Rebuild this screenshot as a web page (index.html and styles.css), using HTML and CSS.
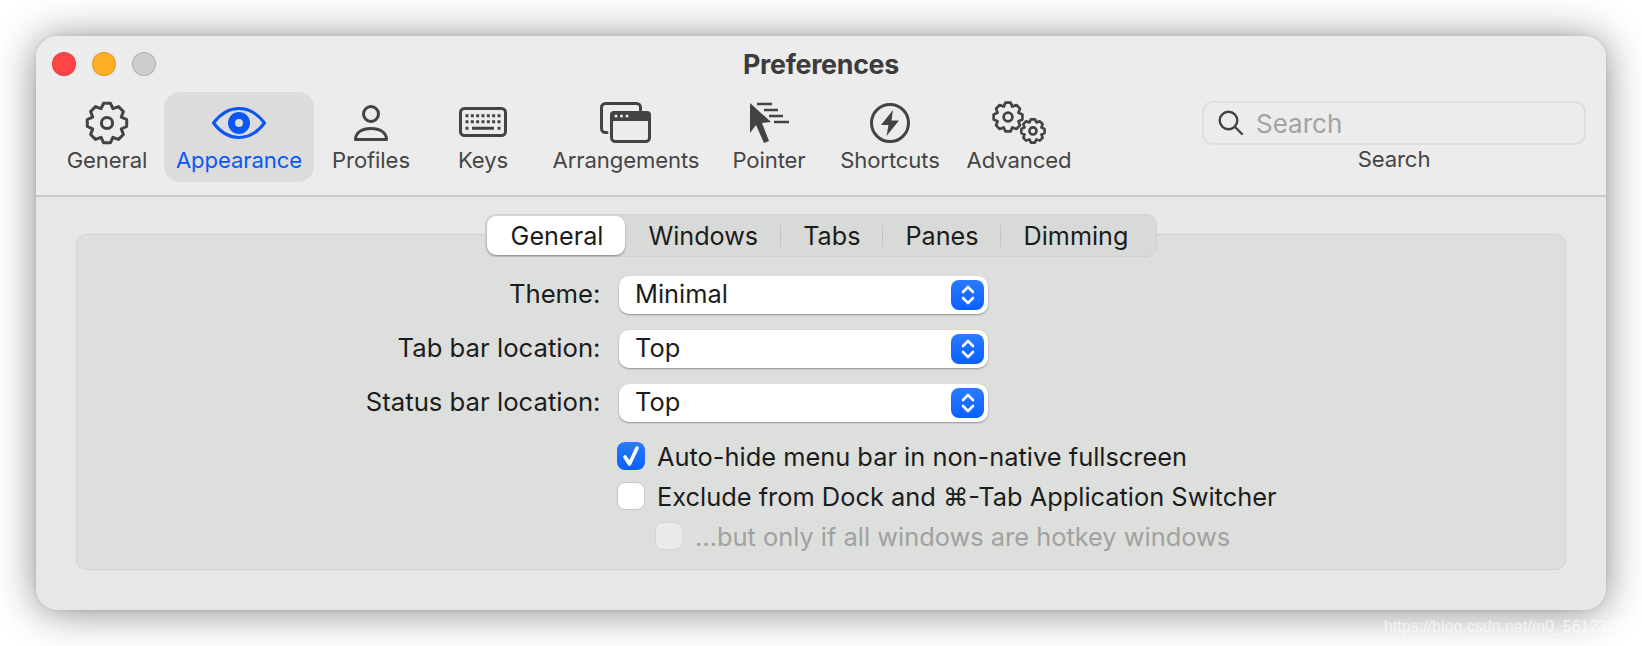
FILE: index.html
```html
<!DOCTYPE html>
<html lang="en">
<head>
<meta charset="utf-8">
<title>Preferences</title>
<link rel="stylesheet" href="styles.css">
</head>
<body>
<svg class="defs" width="0" height="0" aria-hidden="true">
  <defs>
    <path id="gear" d="M43.7 20.5 43.7 27.5 38.3 29.9 40.4 35.5 35.5 40.4 29.9 38.3 27.5 43.7 20.5 43.7 18.1 38.3 12.5 40.4 7.6 35.5 9.7 29.9 4.3 27.5 4.3 20.5 9.7 18.1 7.6 12.5 12.5 7.6 18.1 9.7 20.5 4.3 27.5 4.3 29.9 9.7 35.5 7.6 40.4 12.5 38.3 18.1Z"/>
  </defs>
</svg>
<main class="window">
  <header class="header">
    <div class="titlebar">
      <div class="lights">
        <span class="light light-close"></span>
        <span class="light light-min"></span>
        <span class="light light-max"></span>
      </div>
      <h1 class="title">Preferences</h1>
    </div>
    <nav class="toolbar">
      <div class="tool tool-general">
        <svg class="icon" width="48" height="46" viewBox="0 0 48 46"><g transform="translate(0 -1)"><use href="#gear"/><circle cx="24" cy="24" r="5.6"/></g></svg>
        <span class="tool-label">General</span>
      </div>
      <div class="tool tool-appearance is-active">
        <svg class="icon icon-blue" width="56" height="46" viewBox="0 0 56 46"><path d="M2.5 23C10 13 19 8.5 28 8.5S46 13 53.5 23C46 33 37 37.5 28 37.5S10 33 2.5 23Z"/><circle cx="28" cy="23" r="7.5" class="pupil"/></svg>
        <span class="tool-label">Appearance</span>
      </div>
      <div class="tool tool-profiles">
        <svg class="icon" width="40" height="46" viewBox="0 0 40 46"><circle cx="20" cy="14" r="7.5"/><path d="M4.5 39.5C4.5 32.5 11 28.5 20 28.5S35.5 32.5 35.5 39.5Z"/></svg>
        <span class="tool-label">Profiles</span>
      </div>
      <div class="tool tool-keys">
        <svg class="icon" width="50" height="46" viewBox="0 0 50 46"><rect x="2.5" y="8.5" width="45" height="27" rx="4"/><line class="keys" x1="7.5" y1="15.7" x2="42.5" y2="15.7"/><line class="keys" x1="7.5" y1="21.7" x2="42.5" y2="21.7"/><line class="keyrow" x1="7.5" y1="28.3" x2="10.5" y2="28.3"/><line class="keyrow" x1="14" y1="28.3" x2="36" y2="28.3"/><line class="keyrow" x1="39.5" y1="28.3" x2="42.5" y2="28.3"/></svg>
        <span class="tool-label">Keys</span>
      </div>
      <div class="tool tool-arrangements">
        <svg class="icon" width="54" height="46" viewBox="0 0 54 46"><path d="M8 32.5H6.5a4 4 0 0 1-4-4V7.5a4 4 0 0 1 4-4h31a4 4 0 0 1 4 4V10"/><rect x="12.5" y="12.5" width="38" height="29" rx="4"/><path class="solid" d="M11 21V15a4 4 0 0 1 4-4H48a4 4 0 0 1 4 4V21Z"/><circle class="dot" cx="17" cy="16" r="1.5"/><circle class="dot" cx="22.5" cy="16" r="1.5"/><circle class="dot" cx="28" cy="16" r="1.5"/></svg>
        <span class="tool-label">Arrangements</span>
      </div>
      <div class="tool tool-pointer">
        <svg class="icon" width="42" height="46" viewBox="0 0 42 46"><path class="solid" d="M2 3V33L8 25 16 43 21 41 14 23 23 22Z"/><path class="thin" d="M9 4H24M16 10H30M21 16H35M26 22H41"/></svg>
        <span class="tool-label">Pointer</span>
      </div>
      <div class="tool tool-shortcuts">
        <svg class="icon" width="44" height="46" viewBox="0 0 44 46"><circle cx="22" cy="23" r="18.5"/><path class="solid" d="M25 10 13 25H20.5L18.5 36 31 20.5H23.5Z"/></svg>
        <span class="tool-label">Shortcuts</span>
      </div>
      <div class="tool tool-advanced">
        <svg class="icon icon-gears" width="60" height="46" viewBox="0 0 60 46"><g transform="translate(1.5 -0.5) scale(.73)" class="gear-big"><use href="#gear"/><circle cx="24" cy="24" r="6"/></g><g transform="translate(29.8 16.8) scale(.59)" class="gear-small"><use href="#gear"/><circle cx="24" cy="24" r="6"/></g></svg>
        <span class="tool-label">Advanced</span>
      </div>
      <div class="search">
        <div class="search-field">
          <svg class="icon search-icon" width="28" height="28" viewBox="0 0 28 28"><circle cx="11.5" cy="11.5" r="8.8"/><path d="M18 18 25 25"/></svg>
          <span class="search-text">Search</span>
        </div>
        <span class="tool-label">Search</span>
      </div>
    </nav>
  </header>
  <section class="content">
    <div class="panel">
      <div class="tabs">
        <span class="tab is-selected">General</span>
        <span class="tab">Windows</span>
        <span class="tab tab-sep">Tabs</span>
        <span class="tab tab-sep">Panes</span>
        <span class="tab tab-sep tab-last">Dimming</span>
      </div>
      <div class="form">
        <span class="form-label">Theme:</span>
        <div class="select"><span class="select-text">Minimal</span><span class="stepper"><svg width="18" height="24" viewBox="0 0 18 24"><path d="M4 9 9 4 14 9M4 15 9 20 14 15"/></svg></span></div>
        <span class="form-label">Tab bar location:</span>
        <div class="select"><span class="select-text">Top</span><span class="stepper"><svg width="18" height="24" viewBox="0 0 18 24"><path d="M4 9 9 4 14 9M4 15 9 20 14 15"/></svg></span></div>
        <span class="form-label">Status bar location:</span>
        <div class="select"><span class="select-text">Top</span><span class="stepper"><svg width="18" height="24" viewBox="0 0 18 24"><path d="M4 9 9 4 14 9M4 15 9 20 14 15"/></svg></span></div>
      </div>
      <div class="checks">
        <div class="check"><span class="box is-on"><svg width="22" height="24" viewBox="0 0 22 24"><path d="M5 13 9.5 20 17 4"/></svg></span><span>Auto-hide menu bar in non-native fullscreen</span></div>
        <div class="check"><span class="box"></span><span>Exclude from Dock and ⌘-Tab Application Switcher</span></div>
        <div class="check check-sub"><span class="box box-off"></span><span>...but only if all windows are hotkey windows</span></div>
      </div>
    </div>
  </section>
</main>
<div class="watermark">https://blog.csdn.net/m0_56123982</div>
</body>
</html>
```

FILE: styles.css
```css
* { box-sizing: border-box; }
html, body { margin: 0; height: 100%; }
body {
  width: 1642px;
  height: 646px;
  padding: 36px;
  background: #fff;
  overflow: hidden;
  font-family: Inter, "Noto Sans", "DejaVu Sans", sans-serif;
  position: relative;
}
.defs { display: block; height: 0; }
.window {
  width: 1570px;
  height: 574px;
  border-radius: 22px;
  overflow: hidden;
  display: flex;
  flex-direction: column;
  box-shadow: 0 2px 42px rgba(0, 0, 0, .46), 0 0 4px rgba(0, 0, 0, .1);
}
.header {
  height: 161px;
  flex: none;
  background: #ececec;
  border-bottom: 2px solid #c9cac8;
}
.titlebar {
  height: 56px;
  display: flex;
  align-items: center;
  justify-content: center;
  position: relative;
}
.lights {
  position: absolute;
  left: 16px;
  top: 16px;
  display: flex;
  gap: 16px;
}
.light {
  width: 24px;
  height: 24px;
  border-radius: 50%;
  border: 1px solid rgba(0, 0, 0, .14);
}
.light-close { background: #ff4546; }
.light-min { background: #ffb024; }
.light-max { background: #cdcecc; }
.title {
  margin: -1px 0 0;
  font-size: 26.8px;
  line-height: 32px;
  font-weight: 700;
  letter-spacing: -.3px;
  color: #3c3c3c;
}
.toolbar {
  display: flex;
  gap: 4px;
  height: 90px;
  padding: 0 20px 0 18px;
}
.tool {
  display: flex;
  flex-direction: column;
  align-items: center;
  padding-top: 8px;
  border-radius: 16px;
}
.tool-general { width: 106px; }
.tool-appearance { width: 150px; }
.tool-profiles { width: 106px; }
.tool-keys { width: 110px; }
.tool-arrangements { width: 168px; }
.tool-pointer { width: 110px; }
.tool-shortcuts { width: 124px; }
.tool-advanced { width: 126px; }
.tool.is-active { background: #dcdcdc; color: #0b57f5; }
.tool-label {
  display: block;
  font-size: 22.1px;
  line-height: 29px;
  letter-spacing: -.1px;
  color: #454545;
  white-space: nowrap;
}
.is-active .tool-label { color: #0b57f5; }
.icon { display: block; fill: none; stroke: #434343; stroke-width: 3; stroke-linejoin: round; stroke-linecap: round; }
.icon-blue { stroke: #0b57f5; }
.pupil { stroke-width: 7; }
.keys { stroke-dasharray: 3 2.33; stroke-linecap: butt; }
.keyrow { stroke-linecap: butt; }
.solid { fill: #434343; stroke: none; }
.dot { fill: #ececec; stroke: none; }
.thin { stroke-width: 2.4; stroke-linecap: butt; }
.gear-big { stroke-width: 3.7; }
.gear-small { stroke-width: 4.4; }
.search {
  margin-left: auto;
  width: 384px;
  padding-top: 9px;
  display: flex;
  flex-direction: column;
  align-items: center;
}
.search-field {
  width: 100%;
  height: 44px;
  display: flex;
  align-items: center;
  gap: 11px;
  padding-left: 13px;
  border: 2px solid #dfdfdf;
  border-radius: 11px;
}
.search-text { font-size: 26px; color: #a3a3a3; }
.search-icon { flex: none; stroke-width: 2.4; }
.content {
  flex: 1;
  background: #e6e8e5;
  padding: 37px 40px 40px;
  display: flex;
}
.panel {
  flex: 1;
  background: #dddfdd;
  border: 1px solid #d1d3d1;
  border-radius: 10px;
  display: flex;
  flex-direction: column;
  font-size: 25.4px;
  color: #1c1c1c;
}
.tabs {
  align-self: center;
  margin-top: -21px;
  display: flex;
  height: 43px;
  padding: 1px;
  font-size: 25.2px;
  background: #d8dad7;
  border: 1px solid #d0d2cf;
  border-radius: 11px;
}
.tab {
  display: flex;
  align-items: center;
  padding: 0 21.5px 0 23.5px;
  position: relative;
  border-radius: 9px;
}
.tab-last { padding-right: 26.5px; }
.tab.is-selected {
  background: #fff;
  box-shadow: 0 1px 2px rgba(0, 0, 0, .4);
}
.tab-sep::before {
  content: "";
  position: absolute;
  left: 0;
  top: 9px;
  bottom: 8px;
  width: 1px;
  background: #c2c4c1;
}
.form {
  margin-top: 19px;
  display: grid;
  grid-template-columns: 523.5px 370px;
  column-gap: 17px;
  row-gap: 16px;
  align-items: center;
}
.form-label {
  text-align: right;
  white-space: nowrap;
  font-size: 25.7px;
  line-height: 30px;
  padding-bottom: 2px;
}
.select {
  margin-left: 1.5px;
  height: 38px;
  background: #fff;
  border-radius: 10px;
  box-shadow: 0 1px 2px rgba(0, 0, 0, .35);
  display: flex;
  align-items: center;
  justify-content: space-between;
  padding: 0 3.5px 0 16px;
}
.select-text { line-height: 30px; padding-bottom: 2px; }
.stepper {
  width: 33px;
  height: 30px;
  border-radius: 8px;
  background: linear-gradient(#2a7bfb, #0a60ff);
  display: flex;
  align-items: center;
  justify-content: center;
}
.stepper svg, .box svg { fill: none; stroke: #fff; stroke-width: 2.6; stroke-linecap: round; stroke-linejoin: round; }
.checks {
  margin-top: 20px;
  margin-left: 540px;
  display: flex;
  flex-direction: column;
  gap: 12px;
}
.check {
  display: flex;
  align-items: center;
  gap: 12px;
  height: 28px;
  white-space: nowrap;
}
.check-sub { margin-left: 38px; color: #a0a1a0; }
.box {
  width: 28px;
  height: 28px;
  flex: none;
  border-radius: 8px;
  background: #fff;
  border: 1px solid #c4c5c4;
  display: flex;
  align-items: center;
  justify-content: center;
}
.box.is-on { background: linear-gradient(#2a7bfb, #0a60ff); border: 0; }
.box.is-on svg { stroke-width: 3.6; }
.box-off { background: #e9eae9; border-color: #d4d5d4; }
.watermark {
  position: absolute;
  left: 1384px;
  top: 616px;
  font-family: "Liberation Sans", sans-serif;
  font-size: 16px;
  line-height: 22px;
  color: rgba(255, 255, 255, .62);
  white-space: nowrap;
}
```
